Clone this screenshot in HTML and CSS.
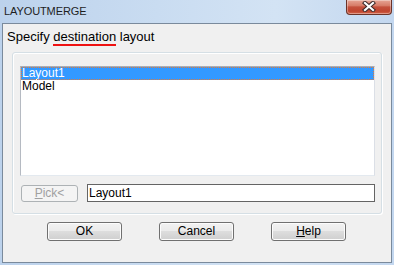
FILE: index.html
```html
<!DOCTYPE html>
<html>
<head>
<meta charset="utf-8">
<link rel="stylesheet" href="styles.css">
</head>
<body>
<div class="win">
  <div class="titlebar">
    <span class="title">LAYOUTMERGE</span>
    <div class="close">
      <svg width="14" height="11" viewBox="0 0 14 11">
        <path d="M3 2 L11 9 M11 2 L3 9" stroke="#3b2a2a" stroke-width="4.2" stroke-linecap="square" fill="none"/>
        <path d="M3 2 L11 9 M11 2 L3 9" stroke="#ffffff" stroke-width="2.2" stroke-linecap="square" fill="none"/>
      </svg>
    </div>
  </div>
  <div class="client">
    <div class="prompt">Specify <span class="mark">destination</span> layout</div>
    <div class="group">
      <div class="list">
        <div class="item sel">Layout1</div>
        <div class="item">Model</div>
      </div>
      <div class="pickrow">
        <div class="pick"><u>P</u>ick&lt;</div>
        <div class="field">Layout1</div>
      </div>
    </div>
    <div class="buttons">
      <div class="btn">OK</div>
      <div class="btn">Cancel</div>
      <div class="btn"><u>H</u>elp</div>
    </div>
  </div>
</div>
</body>
</html>
```

FILE: styles.css
```css
html, body {
  margin: 0;
  padding: 0;
}
body {
  width: 394px;
  height: 265px;
  overflow: hidden;
  font-family: "Liberation Sans", Arial, sans-serif;
  background: linear-gradient(90deg, #bcd2ec 0%, #c9dcf1 40%, #d3e3f4 70%, #c3d7ef 100%);
}
.win {
  width: 394px;
  height: 265px;
  display: flex;
  flex-direction: column;
}
.titlebar {
  height: 23px;
  display: flex;
  justify-content: space-between;
  align-items: flex-start;
  padding: 0 2px 0 4px;
  box-sizing: border-box;
}
.title {
  font-size: 11px;
  color: #1e1e1e;
  line-height: 13px;
  margin-top: 5px;
  letter-spacing: -0.1px;
}
.close {
  width: 46px;
  height: 15px;
  box-sizing: border-box;
  border: 1px solid #6b3328;
  border-top: none;
  border-radius: 0 0 4px 4px;
  background: linear-gradient(#e6a595 0%, #d77c68 40%, #c4503c 50%, #c0452f 80%, #d4674c 100%);
  display: flex;
  align-items: center;
  justify-content: center;
  box-shadow: inset 0 0 0 1px rgba(255,255,255,0.35);
}
.close svg {
  display: block;
  margin-top: -1px;
}
.client {
  margin: 0 2px;
  height: 240px;
  box-sizing: border-box;
  border: 1px solid #7a8a9c;
  background: #f0f0f0;
  display: flex;
  flex-direction: column;
}
.prompt {
  font-size: 13px;
  line-height: 16px;
  color: #000;
  padding: 5px 0 0 4px;
}
.mark {
  border-bottom: 2px solid #ee1111;
}
.group {
  margin: 7px 0 0 9px;
  width: 370px;
  height: 162px;
  box-sizing: border-box;
  border: 1px solid #d5dfe5;
  border-radius: 3px;
  box-shadow: inset 1px 1px 0 #fff, 1px 1px 0 #fff;
  padding: 13px 0 0 7px;
  display: flex;
  flex-direction: column;
}
.list {
  width: 355px;
  height: 110px;
  box-sizing: border-box;
  border: 1px solid #b5bcc7;
  border-color: #abadb3 #dbdfe6 #e3e9ef #b5bac2;
  background: #fff;
  font-size: 12px;
}
.item {
  height: 13px;
  line-height: 13px;
  padding-left: 1px;
  color: #000;
  box-sizing: border-box;
}
.item.sel {
  background: #3399ff;
  color: #fff;
  outline: 1px dotted #e07a3a;
  outline-offset: -1px;
}
.pickrow {
  display: flex;
  align-items: center;
  margin-top: 8px;
  padding-left: 1px;
  gap: 9px;
}
.pick {
  width: 57px;
  height: 17px;
  box-sizing: border-box;
  border: 1px solid #adb2b5;
  border-radius: 3px;
  background: #f4f4f4;
  color: #a0a0a0;
  font-size: 12px;
  line-height: 15px;
  text-align: center;
}
.pick u {
  text-decoration-thickness: 1px;
}
.field {
  width: 288px;
  height: 18px;
  box-sizing: border-box;
  border: 1px solid #646464;
  background: #fff;
  font-size: 12px;
  line-height: 16px;
  padding-left: 1px;
  color: #000;
}
.buttons {
  display: flex;
  gap: 37px;
  margin-top: 8px;
  padding-left: 44px;
}
.btn {
  width: 75px;
  height: 19px;
  box-sizing: border-box;
  border: 1px solid #707070;
  border-radius: 3px;
  background: linear-gradient(#f2f2f2 0%, #ebebeb 45%, #dddddd 50%, #cfcfcf 100%);
  box-shadow: inset 0 0 0 1px #fcfcfc;
  font-size: 12px;
  line-height: 17px;
  text-align: center;
  color: #000;
}
```
